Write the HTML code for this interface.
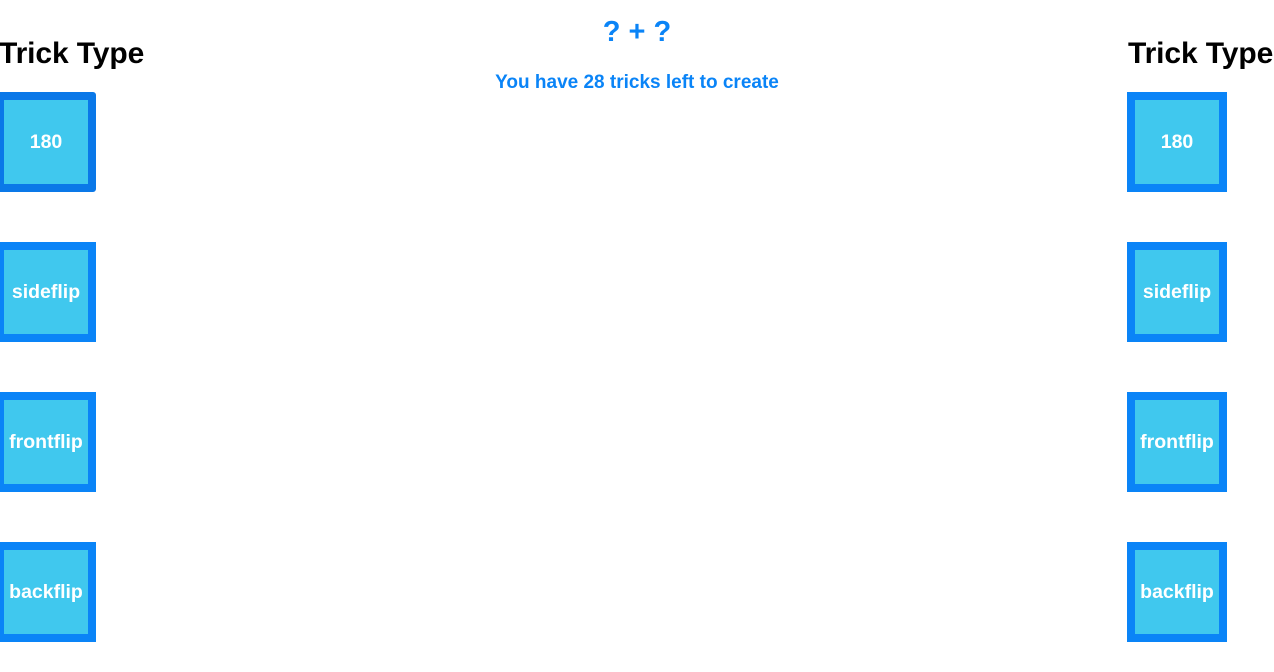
<!DOCTYPE html>
<html><head><style>
body{margin:0;width:1274px;height:672px;background:#fff;position:relative;overflow:hidden;font-family:"Liberation Sans",Arial,sans-serif;}
.h{position:absolute;top:34px;font-size:30px;letter-spacing:-0.1px;font-weight:bold;color:#000;margin:0;line-height:40px;white-space:nowrap;}
.b{position:absolute;width:84px;height:84px;border:8px solid #0a84f7;background:#40c8ee;color:#fff;font-weight:bold;font-size:19.5px;display:flex;align-items:center;justify-content:center;white-space:nowrap;padding-top:1px;box-sizing:content-box;height:83px;}
.c{position:absolute;left:0;width:1274px;text-align:center;color:#0a84f7;font-weight:bold;}
</style></head><body>
<div class="h" style="left:-1px">Trick Type</div>
<div class="h" style="left:1128px">Trick Type</div>
<div class="c" style="top:12px;font-size:29px;line-height:40px">? + ?</div>
<div class="c" style="top:72px;font-size:19px;line-height:22px">You have 28 tricks left to create</div>
<div class="b" style="left:-4px;top:92px;border-color:#0a78e8;border-radius:3px">180</div>
<div class="b" style="left:-4px;top:242px">sideflip</div>
<div class="b" style="left:-4px;top:392px">frontflip</div>
<div class="b" style="left:-4px;top:542px">backflip</div>
<div class="b" style="left:1127px;top:92px">180</div>
<div class="b" style="left:1127px;top:242px">sideflip</div>
<div class="b" style="left:1127px;top:392px">frontflip</div>
<div class="b" style="left:1127px;top:542px">backflip</div>
</body></html>
